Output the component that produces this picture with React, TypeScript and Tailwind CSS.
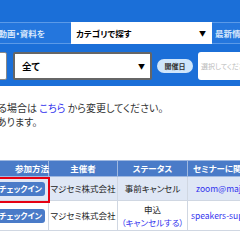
const font = {
    fontFamily: '"Noto Sans CJK JP", "Noto Sans", sans-serif',
    fontFeatureSettings: '"palt"',
};

function Caret() {
    return <span className="text-[7px] leading-none text-black">▼</span>;
}

function CheckinButton() {
    return (
        <button className="bg-[#4a7bc8] text-white text-[8px] font-bold rounded-[3px] px-[3px] h-[14px] leading-[14px] whitespace-nowrap">
            チェックイン
        </button>
    );
}

export default function App() {
    return (
        <div className="relative w-[240px] h-[240px] overflow-hidden bg-white" style={font}>
            {/* search band */}
            <div className="bg-[#1b6fd8] h-[86px] pt-[22px] overflow-hidden">
                <div className="flex h-[22px] -ml-[40px] w-[400px]">
                    <div className="w-[111px] border-y border-[#5b9ae8] bg-[#2476dd] text-[#d6e6fb] text-[8.5px] font-bold flex items-center justify-end pr-[26px] whitespace-nowrap">
                        キーワードで動画・資料を
                    </div>
                    <div className="w-[141px] bg-white flex items-center justify-between pl-[5px] pr-[6px] text-[8.5px] text-black font-bold">
                        <span>カテゴリで探す</span>
                        <Caret />
                    </div>
                    <div className="flex-1 border-y border-[#5b9ae8] bg-[#2476dd] text-[#d6e6fb] text-[8.5px] font-bold flex items-center pl-[3px] whitespace-nowrap">
                        最新情報を探す
                    </div>
                </div>
                <div className="flex items-center h-[28px] mt-[8px] -ml-[60px] w-[400px]">
                    <div className="w-[67px] h-[28px] bg-white rounded-r-[2px] border border-[#888]"></div>
                    <div className="w-[139px] h-[28px] ml-[6px] bg-white rounded-[2px] border-2 border-[#666] flex items-center justify-between pl-[7px] pr-[5px]">
                        <span className="text-[9.5px] font-bold text-black">全て</span>
                        <Caret />
                    </div>
                    <div className="ml-[5px] w-[36px] h-[14px] rounded-full bg-[#cfe6fb] text-[7px] font-bold text-[#333] flex items-center justify-center">
                        開催日
                    </div>
                    <div className="ml-[5px] w-[100px] h-[28px] bg-white rounded-[3px] flex items-center pl-[3px] text-[7px] text-[#bbb] whitespace-nowrap">
                        選択してください
                    </div>
                </div>
            </div>

            {/* notice */}
            <div className="pt-[15px] text-[10px] text-[#333] leading-[14px] whitespace-nowrap">
                <p className="-ml-[31px]">
                    変更する場合は <a className="text-[#3333ee]">こちら</a> から変更してください。
                </p>
                <p className="-ml-[3px]">あります。</p>
            </div>

            {/* table */}
            <div className="mt-[31px] -ml-[22px]">
                <table className="table-fixed border-collapse w-[360px] text-[8.5px] text-[#222]">
                    <thead>
                        <tr className="bg-[#4a7bc8] text-white h-[16px]">
                            <th className="w-[70px] border border-[#9fb8e0] font-bold pl-[36px] whitespace-nowrap">参加方法</th>
                            <th className="w-[69px] border border-[#9fb8e0] font-bold">主催者</th>
                            <th className="w-[70px] border border-[#9fb8e0] font-bold">ステータス</th>
                            <th className="w-[151px] border border-[#9fb8e0] font-bold text-left pl-[5px] whitespace-nowrap">セミナーに関するお問い合わせ</th>
                        </tr>
                    </thead>
                    <tbody>
                        <tr className="bg-[#dfe7f5] h-[24px]">
                            <td className="border border-[#d0d7e2] text-right pr-[3px] whitespace-nowrap">
                                <CheckinButton />
                            </td>
                            <td className="border border-[#d0d7e2] text-center whitespace-nowrap">マジセミ株式会社</td>
                            <td className="border border-[#d0d7e2] text-center whitespace-nowrap">事前キャンセル</td>
                            <td className="border border-[#d0d7e2] text-[#3333ee] pl-[8px] whitespace-nowrap">zoom@majisemi.com</td>
                        </tr>
                        <tr className="bg-white h-[30px]">
                            <td className="border border-[#d0d7e2] text-right pr-[3px] whitespace-nowrap">
                                <CheckinButton />
                            </td>
                            <td className="border border-[#d0d7e2] text-center whitespace-nowrap">マジセミ株式会社</td>
                            <td className="border border-[#d0d7e2] text-center leading-[13px] whitespace-nowrap">
                                申込<br />
                                <a className="text-[#3333ee]">（キャンセルする）</a>
                            </td>
                            <td className="border border-[#d0d7e2] text-[#3333ee] pl-[3px] whitespace-nowrap">speakers-support@majisemi.com</td>
                        </tr>
                    </tbody>
                </table>
            </div>

            {/* highlight annotation */}
            <div className="absolute top-[177px] -left-[10px] w-[60px] h-[26px] border-2 border-[#e60012]"></div>
        </div>
    );
}
